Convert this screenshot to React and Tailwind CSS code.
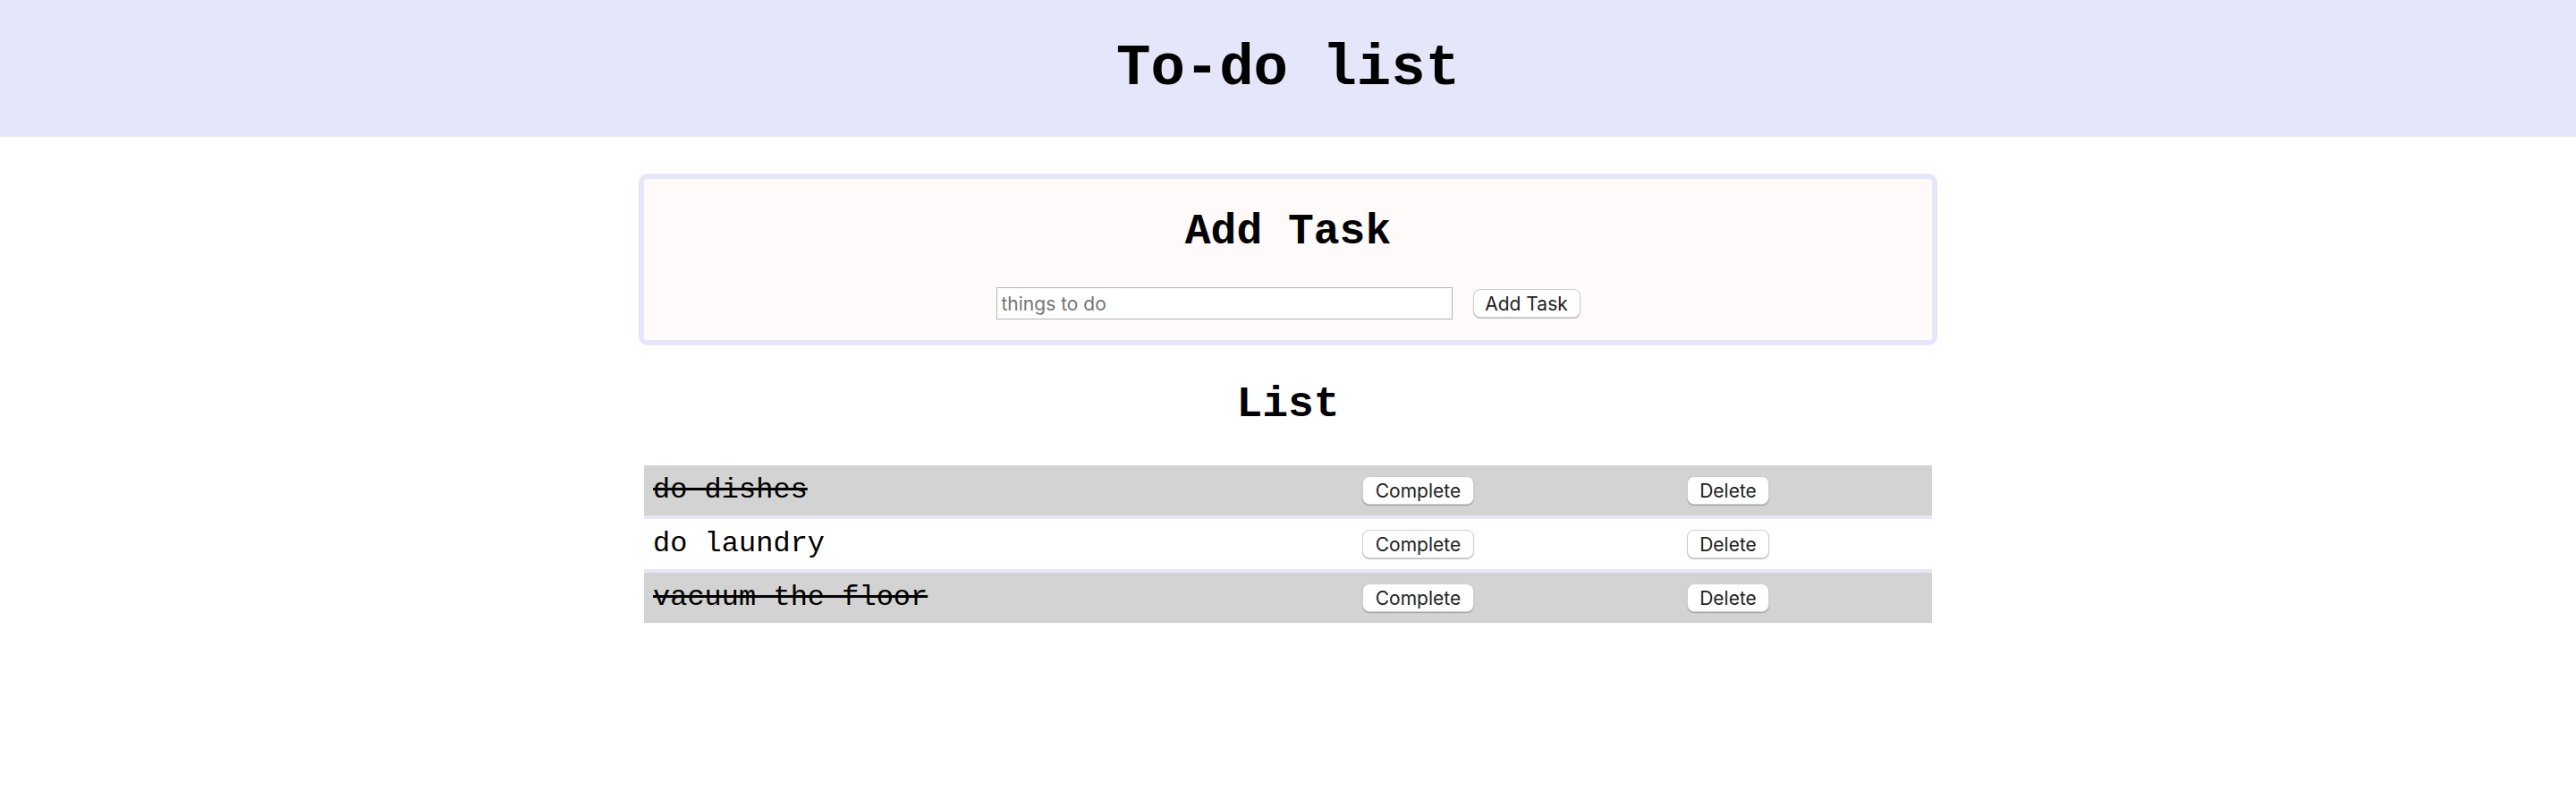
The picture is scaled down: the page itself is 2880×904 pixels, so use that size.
import React, { useState } from "react";

const initialTasks = [
  { id: 1, text: "do dishes", done: true },
  { id: 2, text: "do laundry", done: false },
  { id: 3, text: "vacuum the floor", done: true },
];

const btn =
  "h-[32px] rounded-[8px] border border-[#cfcfcf] bg-white text-[21px] leading-none text-[#222] font-['Inter','Liberation_Sans',sans-serif] shadow-[0_1px_1px_rgba(0,0,0,0.25)]";

const App = () => {
  const [tasks, setTasks] = useState(initialTasks);
  const [input, setInput] = useState("");

  const addTask = () => {
    if (!input.trim()) return;
    setTasks([...tasks, { id: Date.now(), text: input.trim(), done: false }]);
    setInput("");
  };

  const toggleTask = (id) => {
    setTasks(tasks.map((t) => (t.id === id ? { ...t, done: !t.done } : t)));
  };

  const deleteTask = (id) => {
    setTasks(tasks.filter((t) => t.id !== id));
  };

  return (
    <div className="w-full min-h-screen bg-white text-black font-['Courier_New','Liberation_Mono',monospace]">
      {/* Header */}
      <div className="h-[153px] bg-[#e6e6fa] flex items-center justify-center">
        <h1 className="text-[64px] leading-[72px] font-bold">To-do list</h1>
      </div>

      {/* Add Task card */}
      <div className="mx-auto mt-[41px] w-[1452px] rounded-[10px] border-[6px] border-[#e6e6fa] bg-[#fffafa] pt-[32px] pb-[23px]">
        <h2 className="text-center text-[48px] leading-[54px] font-bold">Add Task</h2>
        <div className="mt-[35px] flex items-center justify-center gap-[23px]">
          <input
            type="text"
            placeholder="things to do"
            value={input}
            onChange={(e) => setInput(e.target.value)}
            className="w-[510px] h-[36px] border border-[#b5b5b5] bg-white px-[5px] text-[21px] text-black placeholder:text-[#757575] font-['Inter','Liberation_Sans',sans-serif] outline-none"
          />
          <button onClick={addTask} className={`${btn} w-[120px]`}>
            Add Task
          </button>
        </div>
      </div>

      {/* List */}
      <div className="mx-auto w-[1440px]">
        <h2 className="mt-[39px] text-center text-[48px] leading-[54px] font-bold">List</h2>
        <div className="mt-[41px]">
          {tasks.map((task, i) => (
            <div
              key={task.id}
              className={`grid grid-cols-[803px_363px_1fr] items-center ${
                i < tasks.length - 1 ? "h-[60px] border-b-[4px] border-[#e6e6fa]" : "h-[56px]"
              } ${task.done ? "bg-[#d3d3d3]" : "bg-white"}`}
            >
              <span
                className={`pl-[10px] text-[32px] leading-[36px] ${
                  task.done ? "line-through" : ""
                }`}
              >
                {task.text}
              </span>
              <div>
                <button onClick={() => toggleTask(task.id)} className={`${btn} w-[125px]`}>
                  Complete
                </button>
              </div>
              <div>
                <button onClick={() => deleteTask(task.id)} className={`${btn} w-[92px]`}>
                  Delete
                </button>
              </div>
            </div>
          ))}
        </div>
      </div>
    </div>
  );
};

export default App;
